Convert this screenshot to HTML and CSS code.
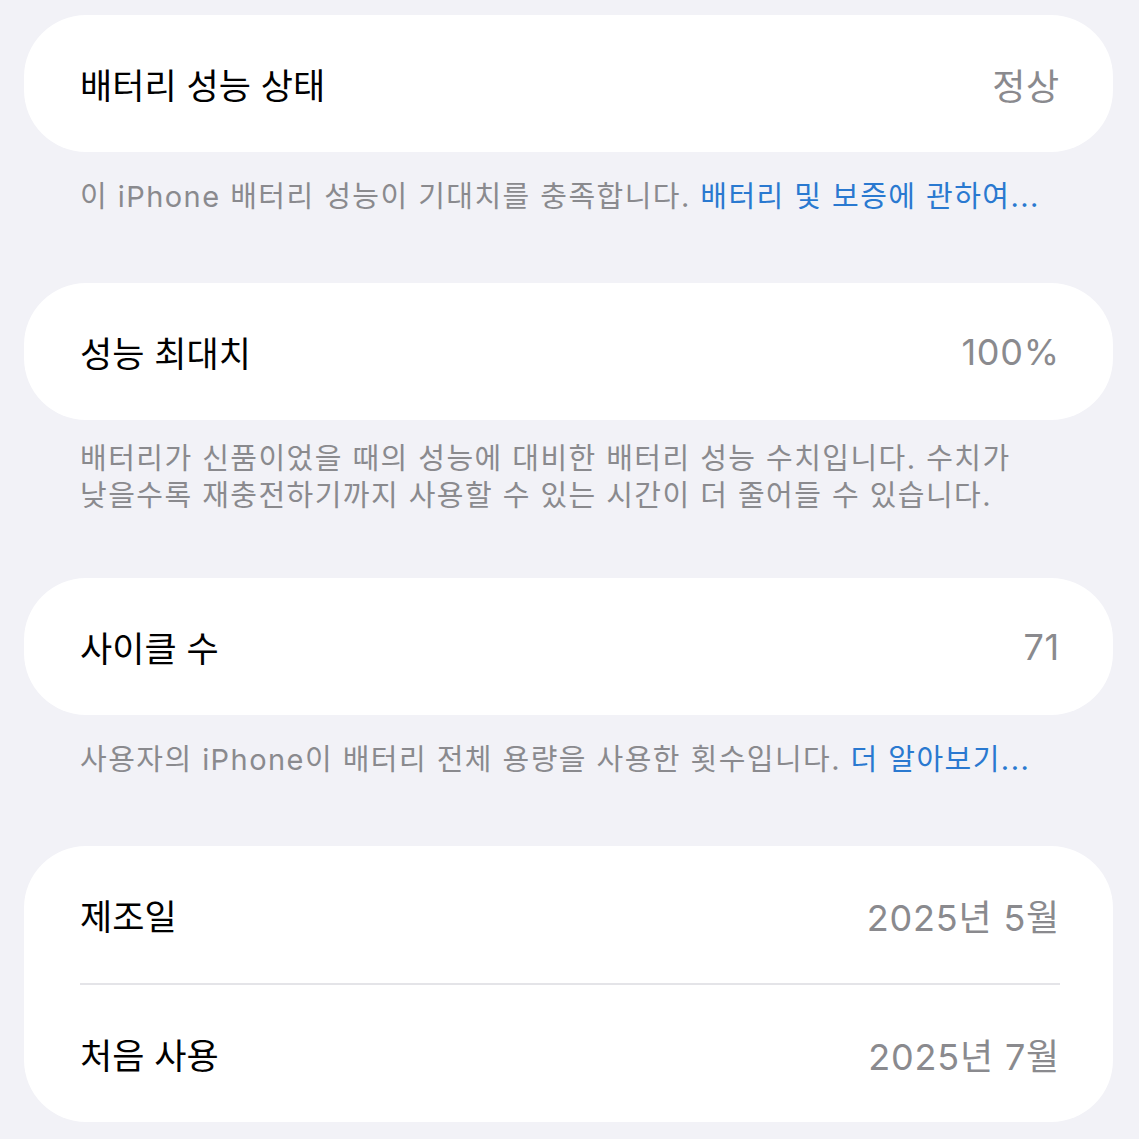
FILE: index.html
```html
<!DOCTYPE html>
<html lang="ko">
    <head>
        <meta charset="utf-8">
        <title>배터리 성능 상태</title>
        <link rel="stylesheet" href="styles.css">
    </head>
    <body>
        <main class="page">
            <section class="group">
                <div class="card">
                    <div class="row">
                        <span class="label">배터리 성능 상태</span>
                        <span class="value">정상</span>
                    </div>
                </div>
                <p class="footer">이 iPhone 배터리 성능이 기대치를 충족합니다. <a href="#">배터리 및 보증에 관하여...</a></p>
            </section>

            <section class="group">
                <div class="card">
                    <div class="row">
                        <span class="label">성능 최대치</span>
                        <span class="value">100%</span>
                    </div>
                </div>
                <p class="footer footer-long">배터리가 신품이었을 때의 성능에 대비한 배터리 성능 수치입니다. 수치가<br>낮을수록 재충전하기까지 사용할 수 있는 시간이 더 줄어들 수 있습니다.</p>
            </section>

            <section class="group">
                <div class="card">
                    <div class="row">
                        <span class="label">사이클 수</span>
                        <span class="value">71</span>
                    </div>
                </div>
                <p class="footer">사용자의 iPhone이 배터리 전체 용량을 사용한 횟수입니다. <a href="#">더 알아보기...</a></p>
            </section>

            <section class="group">
                <div class="card">
                    <div class="row">
                        <span class="label">제조일</span>
                        <span class="value">2025년 5월</span>
                    </div>
                    <div class="row">
                        <span class="label">처음 사용</span>
                        <span class="value">2025년 7월</span>
                    </div>
                </div>
            </section>
        </main>
    </body>
</html>
```

FILE: styles.css
```css
body{
    margin:0;
    padding:0;
    font-family: Inter, "Noto Sans CJK KR", sans-serif;
    background-color:#f2f2f7;
    color:#000;
}
.page{
    padding:15px 26px 0 24px;
}
.card{
    background-color:#fff;
    border-radius:62px;
    padding:0 53px 0 56px;
}
.row{
    height:137px;
    display:flex;
    align-items:center;
    justify-content:space-between;
    font-size:35px;
}
.row + .row{
    border-top:2px solid #e4e4e8;
}
.value{
    color:#8a8a8e;
    font-size:36px;
    letter-spacing:0.8px;
}
.footer{
    margin:0;
    padding:26px 20px 68px 56px;
    font-size:29px;
    line-height:37px;
    letter-spacing:1.45px;
    color:#8a8a8e;
    white-space:nowrap;
}
.footer-long{
    padding-top:20px;
    padding-bottom:64px;
}
.footer a{
    color:#2a79d0;
    text-decoration:none;
}
```
